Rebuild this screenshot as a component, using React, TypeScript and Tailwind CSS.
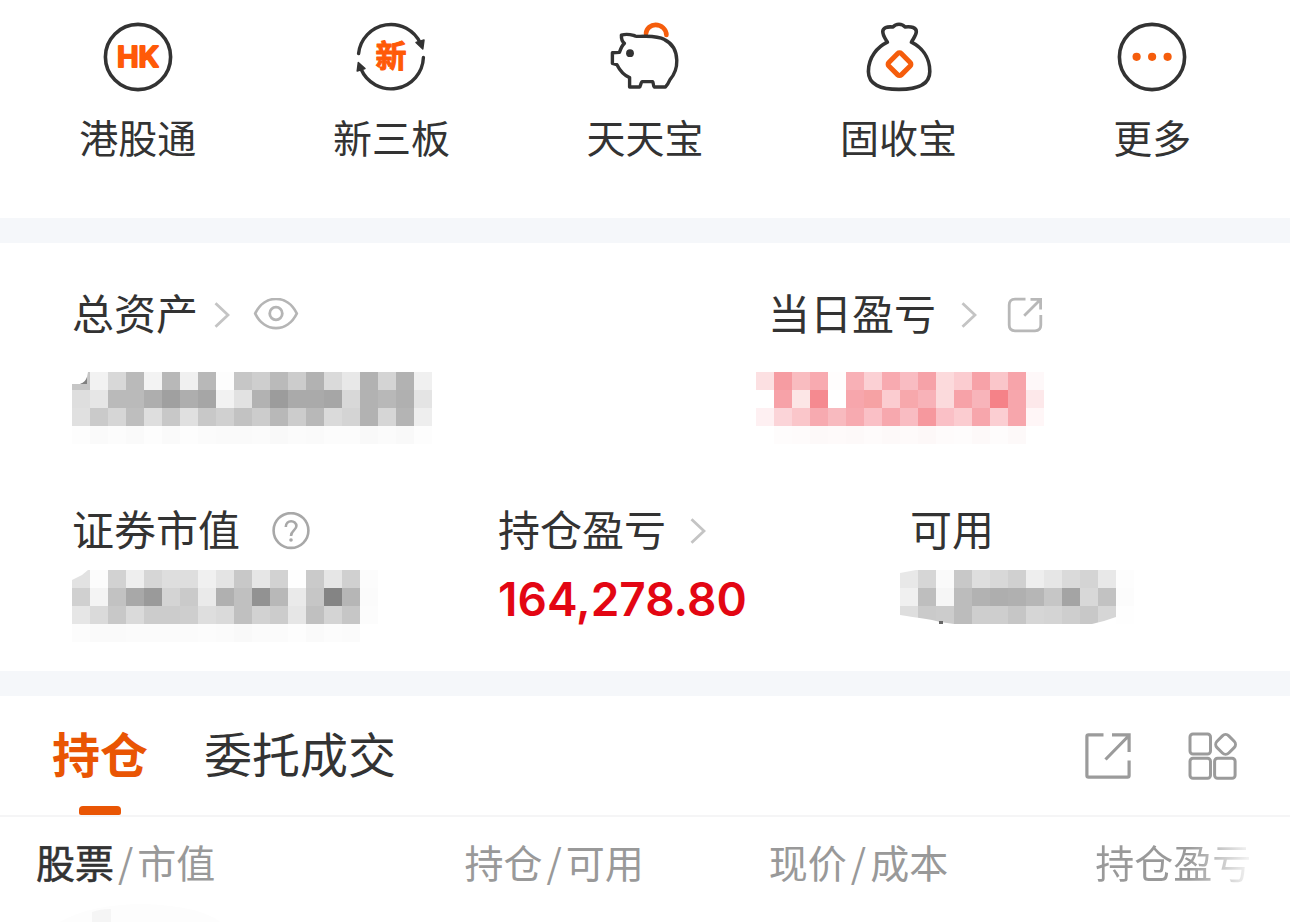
import type { ReactNode } from 'react';

const INK = '#333333';
const ORANGE = '#f55d0c';

/* ---------- shortcut icons ---------- */

function HongKongIcon() {
  return (
    <svg viewBox="0 0 70 70" className="size-[70px]" aria-hidden="true">
      <circle cx="35" cy="35" r="32.6" fill="none" stroke={INK} strokeWidth="3.6" />
      <text
        x="35"
        y="45"
        textAnchor="middle"
        fontSize="29"
        fill="#ff5a08"
        stroke="#ff5a08"
        strokeWidth="2.2"
        strokeLinejoin="round"
        className="font-['Inter',sans-serif] font-semibold"
      >
        HK
      </text>
    </svg>
  );
}

function NewBoardIcon() {
  return (
    <svg viewBox="0 0 70 70" className="size-[70px]" aria-hidden="true">
      <g fill="none" stroke={INK} strokeWidth="3.4" strokeLinecap="round">
        <path d="M2.6 31.5A32.5 32.5 0 0 1 64.5 21.5" />
        <path d="M67.4 35.5A32.5 32.5 0 0 1 5 47" />
      </g>
      <g fill={INK} stroke={INK} strokeWidth="1.5" strokeLinejoin="round">
        <path d="M60 20.5L68 18L66.8 27Z" />
        <path d="M2.3 40.5L1.2 49L9 46.5Z" />
      </g>
      <text
        x="35"
        y="45"
        textAnchor="middle"
        fontSize="31"
        fill="#ff5a08"
        stroke="#ff5a08"
        strokeWidth="1"
        strokeLinejoin="round"
        className="font-['Noto_Sans_CJK_SC',sans-serif] font-bold"
      >
        新
      </text>
    </svg>
  );
}

function PiggyIcon() {
  return (
    <svg viewBox="0 0 70 70" className="size-[70px]" aria-hidden="true">
      <path d="M36 11.5C36.5 6 41 2.9 45.5 2.9C51.5 2.9 56.5 7.5 56.4 13" fill="none" stroke={ORANGE} strokeWidth="4.6" strokeLinecap="round" />
      <path
        d="M2.4 30.8V41.4L6.8 42.6C9.5 48 14 53.5 19.6 55.6V65H29.6C30.6 64.6 30.6 61 32 59.6H42.6C43.6 60 42.8 64 44.4 65H55.4C57 63.5 58.5 61 60 57.6C64.5 52.5 67 46.5 66.8 38.4C66.5 28 61.5 21 54.5 17.6C49 14.7 44 14.5 36 14.3C30 14.1 28 14.7 25.5 14.1C21.5 13 18 11 11.4 13.2C11.2 16.5 12 19.5 14.4 21.4C12 23.5 10.6 27 9.4 30.4Z"
        fill="none"
        stroke={INK}
        strokeWidth="3.4"
        strokeLinejoin="round"
      />
      <circle cx="20" cy="31.2" r="3.9" fill={INK} />
    </svg>
  );
}

function MoneyBagIcon() {
  return (
    <svg viewBox="0 0 70 70" className="size-[70px]" aria-hidden="true">
      <path
        d="M23.4 20.2C21.5 17 18.6 13.5 18.8 9.4C19 5.8 22.6 4.3 29 5C30.5 3 32.5 2.2 35 2.2C37.5 2.2 39.5 3 41 5C47.5 4.3 52.3 5.5 52.3 9.6C52.3 13.5 49 17 47.4 20.2C57 25 65.8 34.5 65.8 49.5C65.8 62.5 53.5 67.4 35 67.4C16.5 67.4 4.4 62.5 4.4 49.5C4.4 35 13.5 25 23.4 20.2Z"
        fill="none"
        stroke={INK}
        strokeWidth="3.6"
        strokeLinejoin="round"
      />
      <rect x="26.7" y="33.4" width="17.6" height="17.6" rx="2.5" transform="rotate(45 35.5 42.2)" fill="none" stroke={ORANGE} strokeWidth="5" />
    </svg>
  );
}

function MoreIcon() {
  return (
    <svg viewBox="0 0 70 70" className="size-[70px]" aria-hidden="true">
      <circle cx="35" cy="35" r="32.6" fill="none" stroke={INK} strokeWidth="3.6" />
      <g fill={ORANGE}>
        <circle cx="19.6" cy="34.8" r="4.1" />
        <circle cx="35.1" cy="34.8" r="4.1" />
        <circle cx="50.6" cy="34.8" r="4.1" />
      </g>
    </svg>
  );
}

/* ---------- line icons ---------- */

function Chevron() {
  return (
    <svg viewBox="0 0 16 28" className="h-7 w-4 shrink-0" fill="none" stroke="#c4c4c4" strokeWidth="2.8" aria-hidden="true">
      <path d="M1.5 2.2L14 14L1.5 25.8" />
    </svg>
  );
}

function EyeIcon() {
  return (
    <svg viewBox="0 0 46 34" className="h-[34px] w-[46px]" fill="none" stroke="#b5b5b5" strokeWidth="2.8" aria-hidden="true">
      <path d="M2.2 15.5C11.5 -3.9 34.5 -3.9 43.8 15.5C34.5 34.9 11.5 34.9 2.2 15.5Z" strokeLinejoin="round" />
      <circle cx="23" cy="15.5" r="6.3" />
    </svg>
  );
}

function ShareSmallIcon() {
  return (
    <svg viewBox="0 0 36 36" className="size-9" fill="none" stroke="#b8b8b8" strokeWidth="2.8" aria-hidden="true">
      <path d="M18.5 2.2H8Q2.2 2.2 2.2 8V28Q2.2 33.8 8 33.8H28Q33.8 33.8 33.8 28V18" />
      <path d="M17.2 18.8L33 3M23.5 2.4H33.6V12.5" />
    </svg>
  );
}

function HelpIcon() {
  return (
    <svg viewBox="0 0 38 38" className="size-[38px]" fill="none" stroke="#a8a8a8" strokeWidth="2.6" aria-hidden="true">
      <circle cx="19" cy="18.5" r="17.4" />
      <path d="M13.8 15C13.8 7.1 24.4 7.7 24.4 14.1C24.4 18.1 19 18.3 19 24" />
      <circle cx="19" cy="28" r="1.8" fill="#a8a8a8" stroke="none" />
    </svg>
  );
}

function ShareIcon() {
  return (
    <svg viewBox="0 0 46 46" className="size-[46px]" fill="none" stroke="#9b9b9b" strokeWidth="3.2" aria-hidden="true">
      <path d="M18.5 1.9H3.5Q1.9 1.9 1.9 3.5V42.5Q1.9 44.1 3.5 44.1H42.5Q44.1 44.1 44.1 42.5V27.5" />
      <path d="M20.5 26.5L43.5 3M27 1.9H44.1V19" />
    </svg>
  );
}

function GridIcon() {
  return (
    <svg viewBox="0 0 50 48" className="h-12 w-[50px]" fill="none" stroke="#9b9b9b" strokeWidth="3" aria-hidden="true">
      <rect x="2" y="2" width="20.5" height="20" rx="3" />
      <rect x="2" y="26.2" width="20.5" height="20" rx="3" />
      <rect x="26.6" y="26.2" width="20.5" height="20" rx="3" />
      <rect x="29.3" y="4.1" width="16.6" height="16.6" rx="4.5" transform="rotate(45 37.6 12.4)" />
    </svg>
  );
}

/* ---------- masked amounts ---------- */

const TOTAL_ASSETS = [
  'ffffff f2f2f2 d8d8d8 bababa f3f3f3 b8b8b8 f0f0f0 b8b8b8 fdfdfd c6c6c6 cecece bababa cccccc b2b2b2 dadada e8e8e8 b2b2b2 d4d4d4 b2b2b2 f0f0f0',
  'dedede e6e6e6 bababa bababa aeaeae a0a0a0 aeaeae a6a6a6 f2f2f2 e2e2e2 b2b2b2 9c9c9c aaaaaa aaaaaa a6a6a6 d8d8d8 b2b2b2 b8b8b8 b0b0b0 e4e4e4',
  'e0e0e0 cacaca d6d6d6 bebebe dedede c8c8c8 e0e0e0 c8c8c8 d0d0d0 c2c2c2 cccccc b8b8b8 cccccc b8b8b8 dadada d4d4d4 b2b2b2 d6d6d6 b4b4b4 eeeeee',
  'fdfdfd fafafa fcfcfc fafafa fdfdfd fafafa fdfdfd fbfbfb fafafa fafafa fbfbfb f9f9f9 fbfbfb fafafa fcfcfc fcfcfc f9f9f9 fbfbfb f9f9f9 fdfdfd',
];

const DAY_PROFIT = [
  'fce0e2 f69ca2 f9bcc0 f8aab0 fffdfd f8b0b6 fbd0d4 f8aab0 f9bcc2 f6a2a8 fcdadc fbccd0 f7a2a8 fac6ca f7a4aa fef8f9',
  'ffffff f7a2a8 fce6e6 f58a90 ffffff f7a6ac f6a2a4 fbccd0 f7a8ac f8b2b8 fbdadc f7a2a8 f8b4ba f58288 f7a6ac fde8ea',
  'fef0f2 fbd4d8 fac6ca f7aab0 f8babf f7aab0 fac0c6 f7a8ae f9bcc2 f6989e fac0c6 fbccd0 f7a6ac fbced2 f7a6ac fff6f7',
  'ffffff fefcfc fefbfb fdf9f9 fefafa fdf9f9 fefbfb fdf9f9 fefafa fdf8f8 fefbfb fefcfc fdf9f9 fefcfc fdf9f9 ffffff',
];

const SECURITIES = [
  'e2e2e2 fcfcfc d2d2d2 eeeeee d6d6d6 dedede dedede f0f0f0 e4e4e4 c8c8c8 e6e6e6 d2d2d2 fefefe cacaca e6e6e6 d0d0d0 fcfcfc',
  'd0d0d0 f4f4f4 c2c2c2 a8a8a8 9a9a9a d4d4d4 cacaca eaeaea b0b0b0 c0c0c0 929292 b8b8b8 eaeaea c6c6c6 848484 b6b6b6 fbfbfb',
  'e6e6e6 dadada c8c8c8 dadada cccccc cccccc cecece dedede dadada c0c0c0 d2d2d2 cccccc e6e6e6 c0c0c0 d4d4d4 c6c6c6 fcfcfc',
  'fcfcfc fafafa fafafa fbfbfb fbfbfb fbfbfb fbfbfb fcfcfc fbfbfb f9f9f9 fbfbfb fbfbfb fdfdfd fafafa fcfcfc fbfbfb ffffff',
];

const AVAILABLE = [
  'e8e8e8 d6d6d6 fafafa c8c8c8 dedede d8d8d8 d0d0d0 eeeeee e6e6e6 dadada d4d4d4 e8e8e8 fdfdfd',
  'f0f0f0 bebebe f6f6f6 bcbcbc b2b2b2 aeaeae b0b0b0 b6b6b6 c6c6c6 a4a4a4 d8d8d8 c2c2c2 fcfcfc',
  'dedede cacaca cccccc bcbcbc cecece cecece c6c6c6 d6d6d6 d4d4d4 cecece c8c8c8 d6d6d6 fefefe',
];

function Mosaic({ rows, label, children }: { rows: string[]; label: string; children?: ReactNode }) {
  const cells = rows.map((row) => row.split(' '));
  const width = cells[0].length * 18;
  return (
    <svg role="img" aria-label={label} width={width} height={72} viewBox={`0 0 ${width} 72`} shapeRendering="crispEdges" className="block">
      {cells.map((row, y) =>
        row.map((color, x) => <rect key={`${x}-${y}`} x={x * 18} y={y * 18} width="18" height="18" fill={`#${color}`} />),
      )}
      {children}
    </svg>
  );
}

/* ---------- page ---------- */

const shortcuts = [
  { label: '港股通', icon: <HongKongIcon /> },
  { label: '新三板', icon: <NewBoardIcon /> },
  { label: '天天宝', icon: <PiggyIcon /> },
  { label: '固收宝', icon: <MoneyBagIcon /> },
  { label: '更多', icon: <MoreIcon /> },
];

function FieldLabel({ children }: { children: ReactNode }) {
  return <span className="block pb-[6px] text-[42px] leading-[50px]">{children}</span>;
}

function ColumnTitle({ first, second, strong }: { first: string; second: string; strong?: boolean }) {
  return (
    <>
      <span className={strong ? 'text-[#333333] [-webkit-text-stroke:0.6px_#333333]' : ''}>{first}</span>
      <span className="mx-1">/</span>
      {second}
    </>
  );
}

export default function App() {
  return (
    <main className="overflow-hidden bg-white font-['Noto_Sans_CJK_SC',sans-serif] text-[#333333]">
      <nav className="grid grid-cols-5 px-[11px] pt-[22px] pb-[54px]">
        {shortcuts.map((item) => (
          <button key={item.label} type="button" className="flex flex-col items-center gap-4">
            {item.icon}
            <span className="text-[39px] leading-14">{item.label}</span>
          </button>
        ))}
      </nav>

      <section className="border-y-[25px] border-[#f5f7fa] pt-11 pb-[29px]">
        <div className="grid grid-cols-[684fr_534fr] pl-18">
          <div>
            <div className="flex items-center">
              <button type="button" className="flex items-center gap-4">
                <FieldLabel>总资产</FieldLabel>
                <Chevron />
              </button>
              <button type="button" aria-label="隐藏金额" className="ml-[23px]">
                <EyeIcon />
              </button>
            </div>
            <div className="mt-[29px]">
              <Mosaic rows={TOTAL_ASSETS} label="总资产已隐藏">
                <path d="M0 18V12H8Q15 10 16 0H18V18Z" fill="#c6c6c6" shapeRendering="auto" />
                <path d="M8 12Q14 10 15 5V12Z" fill="#808080" shapeRendering="auto" />
              </Mosaic>
            </div>
          </div>
          <div>
            <div className="flex items-center pl-3">
              <button type="button" className="flex items-center gap-[25px]">
                <FieldLabel>当日盈亏</FieldLabel>
                <Chevron />
              </button>
              <button type="button" aria-label="分享当日盈亏" className="ml-[30px]">
                <ShareSmallIcon />
              </button>
            </div>
            <div className="mt-[29px]">
              <Mosaic rows={DAY_PROFIT} label="当日盈亏已隐藏" />
            </div>
          </div>
        </div>

        <div className="mt-[59px] grid grid-cols-[426fr_402fr_390fr] pl-18">
          <div>
            <div className="flex items-center gap-8">
              <FieldLabel>证券市值</FieldLabel>
              <button type="button" aria-label="证券市值说明">
                <HelpIcon />
              </button>
            </div>
            <div className="mt-[11px]">
              <Mosaic rows={SECURITIES} label="证券市值已隐藏">
                <path d="M0 0H16L10 5L0 10Z" fill="#ffffff" shapeRendering="auto" />
              </Mosaic>
            </div>
          </div>
          <div>
            <button type="button" className="flex items-center gap-6">
              <FieldLabel>持仓盈亏</FieldLabel>
              <Chevron />
            </button>
            <p className="mt-3 font-['Inter',sans-serif] text-[46px] leading-14 font-semibold text-[#e30613]">164,278.80</p>
          </div>
          <div>
            <div className="pl-[10px]">
              <FieldLabel>可用</FieldLabel>
            </div>
            <div className="mt-[11px]">
              <Mosaic rows={AVAILABLE} label="可用已隐藏">
                <path d="M0 0H16L0 3Z" fill="#ffffff" shapeRendering="auto" />
                <path d="M0 45C18 48 30 49 40 52L54 54H0Z" fill="#ffffff" shapeRendering="auto" />
                <path d="M216 47C208 50 200 52 192 54H216Z" fill="#ffffff" shapeRendering="auto" />
                <rect x="39" y="51" width="4" height="3" fill="#666666" />
              </Mosaic>
            </div>
          </div>
        </div>
      </section>

      <div className="flex items-stretch justify-between border-b-2 border-[#f5f5f6] pr-[52px] pl-13">
        <div role="tablist" className="flex gap-14 text-5xl">
          <button type="button" role="tab" aria-selected="true" className="flex flex-col items-center font-bold text-[#e95504]">
            <span className="pt-5 pb-[18px] leading-18">持仓</span>
            <span className="h-[9px] w-[42px] rounded-t-sm rounded-b-xs bg-[#e95504]" />
          </button>
          <button type="button" role="tab" aria-selected="false" className="flex pt-5 leading-18">
            委托成交
          </button>
        </div>
        <div className="flex items-center gap-[57px]">
          <button type="button" aria-label="分享持仓">
            <ShareIcon />
          </button>
          <button type="button" aria-label="更多功能">
            <GridIcon />
          </button>
        </div>
      </div>

      <table className="w-full table-fixed border-collapse text-left text-[39px] leading-14 text-[#999999]">
        <thead>
          <tr className="whitespace-nowrap">
            <th scope="col" className="w-[36%] pt-4 pb-[11px] pl-9 font-normal">
              <ColumnTitle first="股票" second="市值" strong />
            </th>
            <th scope="col" className="w-[23.6%] pt-4 pb-[11px] font-normal">
              <ColumnTitle first="持仓" second="可用" />
            </th>
            <th scope="col" className="w-[25.3%] pt-4 pb-[11px] font-normal">
              <ColumnTitle first="现价" second="成本" />
            </th>
            <th scope="col" className="pt-4 pb-[11px] font-normal">
              <span className="bg-linear-to-r from-[#999999] from-60% to-[#f6f6f6] bg-clip-text text-transparent">持仓盈亏</span>
            </th>
          </tr>
        </thead>
        <tbody>
          <tr>
            <td colSpan={4} className="p-0">
              <svg viewBox="0 0 220 22" className="block h-[22px] w-[220px]" aria-hidden="true">
                <path d="M60 22Q90 4 145 4Q200 6 220 22Z" fill="#fdfdfd" />
                <path d="M92 22V12Q100 9 111 9V22Z" fill="#f5f5f5" />
              </svg>
            </td>
          </tr>
        </tbody>
      </table>
    </main>
  );
}
